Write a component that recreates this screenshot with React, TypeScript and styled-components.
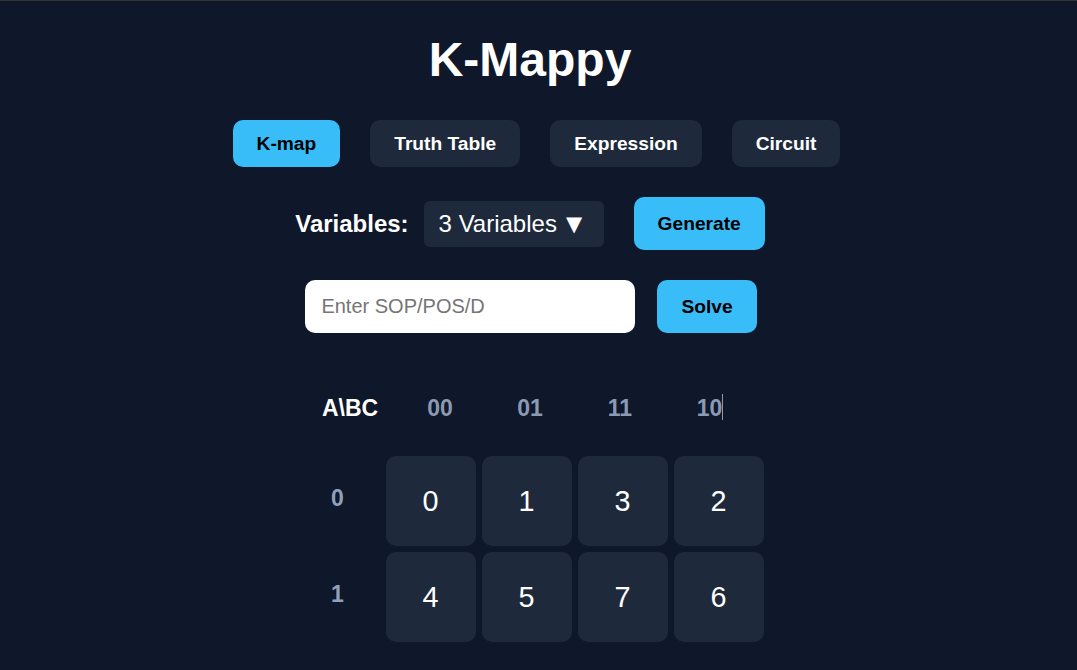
import styled, { createGlobalStyle } from "styled-components";

const GlobalStyle = createGlobalStyle`
  html, body {
    margin: 0;
    padding: 0;
    background: #0f172a;
  }
  body {
    font-family: "Liberation Sans", Arial, sans-serif;
    color: #ffffff;
    border-top: 1px solid #333333;
  }
`;

const Page = styled.div`
  display: flex;
  flex-direction: column;
  align-items: center;
  padding: 31px 17px 0 0;
  min-height: 669px;
  box-sizing: border-box;
`;

const Title = styled.h1`
  margin: 0;
  font-size: 48px;
  font-weight: 700;
  line-height: 55px;
  color: #ffffff;
`;

const Tabs = styled.div`
  display: flex;
  gap: 30px;
  padding-left: 13px;
  margin-top: 33px;
`;

interface TabProps {
  active?: boolean;
}

const Tab = styled.button<TabProps>`
  border: none;
  border-radius: 10px;
  padding: 12px 24px;
  height: 47px;
  font-family: inherit;
  font-size: 19.2px;
  font-weight: 700;
  cursor: pointer;
  background: ${({ active }) => (active ? "#38bdf8" : "#1e293b")};
  color: ${({ active }) => (active ? "#000000" : "#ffffff")};
`;

interface RowProps {
  shift?: number;
}

const Row = styled.div<RowProps>`
  display: flex;
  align-items: center;
  margin-top: 30px;
  padding-left: ${({ shift }) => shift ?? 0}px;
`;

const Label = styled.span`
  font-size: 24px;
  font-weight: 700;
  margin-right: 15px;
`;

const Select = styled.div`
  width: 180px;
  height: 46px;
  box-sizing: border-box;
  display: flex;
  align-items: center;
  padding-left: 15px;
  background: #1e293b;
  border-radius: 6px;
  font-size: 24px;
  color: #ffffff;
  margin-right: 30px;
  white-space: nowrap;
`;

const Arrow = styled.span`
  font-family: "DejaVu Sans", sans-serif;
  font-size: 21px;
  margin-left: 9px;
`;

const PrimaryButton = styled.button`
  border: none;
  border-radius: 10px;
  background: #38bdf8;
  color: #000000;
  font-family: inherit;
  font-size: 19.2px;
  font-weight: 700;
  height: 53px;
  padding: 0 24px;
  cursor: pointer;
`;

const Input = styled.input`
  width: 330px;
  height: 53px;
  box-sizing: border-box;
  border: none;
  border-radius: 10px;
  padding: 0 16px;
  font-family: inherit;
  font-size: 20px;
  margin-right: 22px;
  outline: none;
  &::placeholder {
    color: #757575;
  }
`;

const Map = styled.div`
  display: flex;
  flex-direction: column;
  align-items: center;
  margin-top: 51px;
`;

const HeaderRow = styled.div`
  display: flex;
  height: 48px;
  align-items: center;
  margin-bottom: 24px;
`;

interface HeadProps {
  corner?: boolean;
}

const HeadCell = styled.div<HeadProps>`
  width: 90px;
  text-align: center;
  font-size: 23px;
  font-weight: 700;
  color: ${({ corner }) => (corner ? "#ffffff" : "#8b9ab3")};
`;

const Caret = styled.span`
  display: inline-block;
  width: 1px;
  height: 26px;
  background: #8b9ab3;
  vertical-align: middle;
  margin-top: -4px;
`;

const Grid = styled.div`
  display: flex;
  flex-direction: column;
  gap: 6px;
  margin-left: 1px;
`;

const GridRow = styled.div`
  display: flex;
  align-items: center;
  gap: 6px;
`;

const RowLabel = styled.div`
  width: 80px;
  margin-right: 2px;
  text-align: center;
  font-size: 23px;
  font-weight: 700;
  color: #91a1b9;
  padding-bottom: 6px;
`;

const Cell = styled.div`
  width: 90px;
  height: 90px;
  border-radius: 10px;
  background: #1e293b;
  display: flex;
  align-items: center;
  justify-content: center;
  font-size: 28.8px;
  color: #ffffff;
  cursor: pointer;
`;

const tabs = ["K-map", "Truth Table", "Expression", "Circuit"];
const columns = ["00", "01", "11", "10"];
const rows = [
  { label: "0", cells: [0, 1, 3, 2] },
  { label: "1", cells: [4, 5, 7, 6] },
];

export default function App() {
  return (
    <>
      <GlobalStyle />
      <Page>
        <Title>K-Mappy</Title>
        <Tabs>
          {tabs.map((t, i) => (
            <Tab key={t} active={i === 0}>
              {t}
            </Tab>
          ))}
        </Tabs>
        <Row>
          <Label>Variables:</Label>
          <Select>
            3 Variables<Arrow>▼</Arrow>
          </Select>
          <PrimaryButton>Generate</PrimaryButton>
        </Row>
        <Row shift={2}>
          <Input placeholder="Enter SOP/POS/D" />
          <PrimaryButton>Solve</PrimaryButton>
        </Row>
        <Map>
          <HeaderRow>
            <HeadCell corner>A\BC</HeadCell>
            {columns.map((c, i) => (
              <HeadCell key={c}>
                {c}
                {i === columns.length - 1 && <Caret />}
              </HeadCell>
            ))}
          </HeaderRow>
          <Grid>
            {rows.map((r) => (
              <GridRow key={r.label}>
                <RowLabel>{r.label}</RowLabel>
                {r.cells.map((c) => (
                  <Cell key={c}>{c}</Cell>
                ))}
              </GridRow>
            ))}
          </Grid>
        </Map>
      </Page>
    </>
  );
}
